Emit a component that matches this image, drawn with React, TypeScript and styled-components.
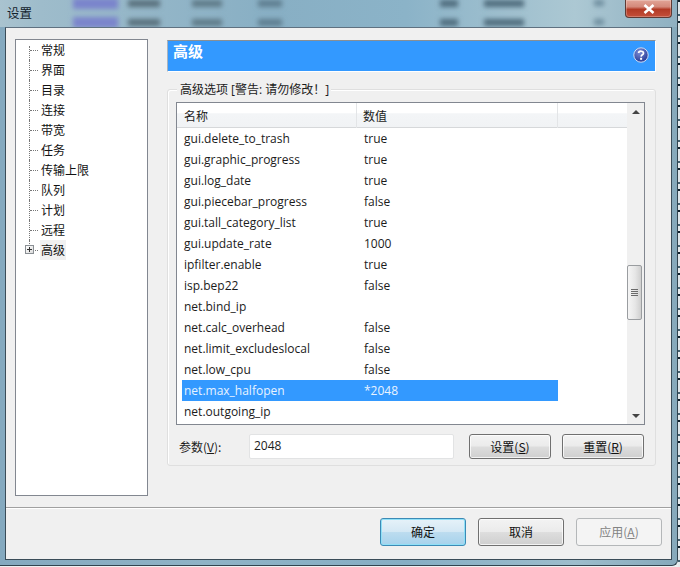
import React from "react";
import styled, { createGlobalStyle } from "styled-components";

const Global = createGlobalStyle`
  html, body { margin: 0; padding: 0; background: #eef1f2; }
  * { box-sizing: border-box; }
`;

const Page = styled.div`
  width: 680px;
  height: 567px;
  overflow: hidden;
  background:
    repeating-linear-gradient(180deg, #10202c 0 2px, #dfe6ea 2px 14px, #44606f 14px 16px, #e8ecee 16px 21px) right top / 2px 100% no-repeat,
    #eef1f2;
  font-family: "Open Sans", "Noto Sans CJK SC", sans-serif;
  font-size: 12px;
  color: #1b1b1b;
`;

const Win = styled.div`
  position: relative;
  width: 678px;
  height: 566px;
  display: flex;
  flex-direction: column;
  border-right: 1px solid #31444f;
  border-bottom: 1px solid #31444f;
  border-bottom-right-radius: 6px;
  background: linear-gradient(90deg, #84a9bf 0%, #8fb3c6 30%, #86aec4 60%, #9dbdcc 85%, #86a9bb 100%);
`;

const TitleBar = styled.div`
  position: relative;
  height: 27px;
  flex: none;
  overflow: hidden;
  background: linear-gradient(90deg, #a9c3cf 0, #9ebccb 6%, #88afc4 40%, #8bb3c8 60%, #acc8d3 85%, #8fb0c1 100%);
`;

const Smudges = styled.svg`
  position: absolute;
  inset: 0;
`;

const Title = styled.span`
  position: absolute;
  left: 7px;
  top: 4px;
  font: 12px/18px "Noto Sans CJK SC", sans-serif;
  font-size: 12.5px;
  color: #12222c;
`;

const CloseBtn = styled.div`
  position: absolute;
  left: 625px;
  top: 0;
  width: 47px;
  height: 18px;
  display: flex;
  align-items: center;
  justify-content: center;
  border: 1px solid #5e3a34;
  border-top: none;
  border-radius: 0 0 4px 4px;
  background: linear-gradient(180deg, #e2a597 0%, #d4897a 40%, #b23a25 55%, #c4503a 100%);
  box-shadow: inset 0 0 0 1px rgba(255, 255, 255, 0.25);
`;

const Client = styled.div`
  flex: 1;
  margin: 0 5px 5px 5px;
  display: flex;
  flex-direction: column;
  border: 1px solid #3a4c58;
  border-top-color: #5f7180;
  background: #f0f0f0;
`;

const Body = styled.div`
  height: 479px;
  flex: none;
  display: flex;
  gap: 19px;
  padding: 11px 0 0 9px;
`;

const Tree = styled.ul`
  list-style: none;
  margin: 0;
  padding: 0;
  width: 133px;
  height: 457px;
  background: #fff;
  border: 1px solid #828790;
`;

const TreeItem = styled.li<{ $first?: boolean; $last?: boolean }>`
  position: relative;
  height: 20px;
  padding-left: 24px;
  display: flex;
  align-items: center;
  &::before {
    content: "";
    position: absolute;
    left: 13px;
    top: ${(p) => (p.$first ? "6px" : "0")};
    height: ${(p) => (p.$first ? "14px" : p.$last ? "10px" : "20px")};
    border-left: 1px dotted #777;
  }
  &::after {
    content: "";
    position: absolute;
    left: 14px;
    top: 10px;
    width: 8px;
    border-top: 1px dotted #777;
  }
`;

const TreeLabel = styled.span<{ $selected?: boolean }>`
  font: 12px/20px "Noto Sans CJK SC", sans-serif;
  padding: 0 1px;
  background: ${(p) => (p.$selected ? "#f0f0f0" : "transparent")};
  color: #111;
`;

const PlusBox = styled.span`
  position: absolute;
  z-index: 1;
  left: 9px;
  top: 5px;
  width: 9px;
  height: 9px;
  border: 1px solid #8a8f94;
  background:
    linear-gradient(#333, #333) center / 5px 1px no-repeat,
    linear-gradient(#333, #333) center / 1px 5px no-repeat,
    linear-gradient(135deg, #fff, #dcdcdc);
`;

const Panel = styled.div`
  width: 489px;
  display: flex;
  flex-direction: column;
`;

const Banner = styled.div`
  margin-top: 1px;
  height: 32px;
  flex: none;
  display: flex;
  justify-content: space-between;
  padding: 0 6px 0 5px;
  background: #3399ff;
  border-top: 1px solid #8a8f94;
  border-left: 1px solid #aab4be;
  border-bottom: 1px solid #fff;
  border-right: 1px solid #fff;
`;

const BannerTitle = styled.span`
  font: bold 15px/20px "Noto Sans CJK SC", sans-serif;
  color: #fff;
`;

const HelpIcon = styled.svg`
  margin-top: 6px;
`;

const Group = styled.div`
  position: relative;
  margin-top: 17px;
  height: 377px;
  padding: 12px 10px 0 8px;
  border: 1px solid #dfdfdf;
  border-radius: 3px;
  box-shadow: inset 1px 1px 0 #fff;
`;

const Legend = styled.span`
  position: absolute;
  left: 9px;
  top: -8px;
  padding: 0 2px 0 3px;
  background: #f0f0f0;
  font: 12px/16px "Open Sans", "Noto Sans CJK SC", sans-serif;
  white-space: pre;
`;

const ListBox = styled.div`
  height: 323px;
  display: flex;
  background: #fff;
  border: 1px solid #828790;
`;

const Table = styled.div`
  flex: 1;
  min-width: 0;
  overflow: hidden;
`;

const HeadRow = styled.div`
  display: grid;
  grid-template-columns: 180px 201px 1fr;
  height: 25px;
  border-bottom: 1px solid #d6d8da;
  background: linear-gradient(180deg, #ffffff 0%, #ffffff 40%, #f3f5f7 45%, #f1f3f5 100%);
`;

const HeadCell = styled.div<{ $pad: number }>`
  padding-left: ${(p) => p.$pad}px;
  border-right: 1px solid #e3e5e7;
  font: 12px/25px "Noto Sans CJK SC", sans-serif;
`;

const Row = styled.div<{ $selected?: boolean }>`
  display: grid;
  grid-template-columns: 175px 201px;
  height: 21px;
  margin-left: 5px;
  width: 376px;
  line-height: 21px;
  font-size: 12px;
  background: ${(p) => (p.$selected ? "#3399ff" : "transparent")};
  color: ${(p) => (p.$selected ? "#e8f3ff" : "#1b1b1b")};
`;

const Cell = styled.div<{ $pad: number }>`
  padding-left: ${(p) => p.$pad}px;
  white-space: nowrap;
`;

const ScrollBar = styled.div`
  width: 17px;
  flex: none;
  display: flex;
  flex-direction: column;
  background: #f0f0f0;
`;

const ArrowBtn = styled.div`
  height: 17px;
  flex: none;
  display: flex;
  align-items: center;
  justify-content: center;
`;

const Arrow = styled.span<{ $down?: boolean }>`
  width: 0;
  height: 0;
  border-left: 4px solid transparent;
  border-right: 4px solid transparent;
  ${(p) => (p.$down ? "border-top: 4px solid #444;" : "border-bottom: 4px solid #444;")}
`;

const Track = styled.div`
  flex: 1;
`;

const Thumb = styled.div`
  margin-top: 145px;
  width: 15px;
  height: 55px;
  display: flex;
  flex-direction: column;
  align-items: center;
  justify-content: center;
  gap: 1px;
  border: 1px solid #9a9da0;
  border-radius: 2px;
  background: linear-gradient(90deg, #f5f5f5 0%, #e6e6e6 55%, #cfcfcf 100%);
`;

const Grip = styled.span`
  width: 7px;
  height: 1px;
  background: #6a6a6a;
`;

const ParamRow = styled.div`
  margin-top: 9px;
  display: flex;
  align-items: flex-start;
  padding-left: 3px;
`;

const ParamLabel = styled.label`
  width: 70px;
  flex: none;
  font: 12px/25px "Noto Sans CJK SC", sans-serif;
`;

const Input = styled.div`
  width: 205px;
  height: 25px;
  flex: none;
  margin-right: 15px;
  padding-left: 4px;
  background: #fff;
  border: 1px solid #e2e3e4;
  border-radius: 2px;
  line-height: 22px;
  font-size: 12px;
`;

const Btn = styled.div<{ $w: number; $h: number; $kind?: "primary" | "disabled" }>`
  width: ${(p) => p.$w}px;
  height: ${(p) => p.$h}px;
  flex: none;
  display: flex;
  align-items: center;
  justify-content: center;
  font: 12px/1 "Noto Sans CJK SC", sans-serif;
  border-radius: 3px;
  border: 1px solid
    ${(p) => (p.$kind === "primary" ? "#3c8ab5" : p.$kind === "disabled" ? "#b4b7b9" : "#707070")};
  color: ${(p) => (p.$kind === "disabled" ? "#838383" : "#111")};
  background: ${(p) =>
    p.$kind === "primary"
      ? "linear-gradient(180deg, #e6f2f9 0%, #d4e8f4 48%, #bcdcef 52%, #a6d2ec 100%)"
      : p.$kind === "disabled"
      ? "#f4f4f4"
      : "linear-gradient(180deg, #f3f3f3 0%, #ebebeb 48%, #dddddd 52%, #cfcfcf 100%)"};
  box-shadow: ${(p) =>
    p.$kind === "primary"
      ? "inset 0 0 0 1px #8fe0f7"
      : p.$kind === "disabled"
      ? "none"
      : "inset 0 0 0 1px rgba(255,255,255,.75)"};
`;

const SmallGap = styled.span`
  width: 11px;
  flex: none;
`;

const Footer = styled.div`
  flex: 1;
  display: flex;
  justify-content: flex-end;
  gap: 12px;
  padding: 10px 9px 0 0;
  border-top: 1px solid #a0a0a0;
  box-shadow: inset 0 1px 0 #fff;
`;

const rows: [string, string][] = [
  ["gui.delete_to_trash", "true"],
  ["gui.graphic_progress", "true"],
  ["gui.log_date", "true"],
  ["gui.piecebar_progress", "false"],
  ["gui.tall_category_list", "true"],
  ["gui.update_rate", "1000"],
  ["ipfilter.enable", "true"],
  ["isp.bep22", "false"],
  ["net.bind_ip", ""],
  ["net.calc_overhead", "false"],
  ["net.limit_excludeslocal", "false"],
  ["net.low_cpu", "false"],
  ["net.max_halfopen", "*2048"],
  ["net.outgoing_ip", ""],
];

const tree = ["常规", "界面", "目录", "连接", "带宽", "任务", "传输上限", "队列", "计划", "远程"];

export default function App() {
  return (
    <Page>
      <Global />
      <Win>
        <TitleBar>
          <Smudges width="678" height="27" aria-hidden="true">
            <defs>
              <filter id="b" x="-30%" y="-100%" width="160%" height="300%">
                <feGaussianBlur stdDeviation="2.6" />
              </filter>
            </defs>
            <g filter="url(#b)">
              {[0, 19].map((y) => (
                <g key={y}>
                  <rect x="73" y={y - 2} width="45" height="11" fill="#7a84cc" />
                  <rect x="128" y={y} width="32" height="7" fill="#586f7b" />
                  <rect x="192" y={y} width="30" height="7" fill="#5f7a88" />
                  <rect x="258" y={y} width="24" height="7" fill="#5f7e90" />
                  <rect x="440" y={y} width="18" height="7" fill="#4f6c7d" />
                  <rect x="484" y={y} width="40" height="7" fill="#4f6c7d" />
                  <rect x="594" y={y} width="10" height="6" fill="#6d8c9d" />
                </g>
              ))}
            </g>
          </Smudges>
          <Title>设置</Title>
          <CloseBtn>
            <svg width="12" height="10" viewBox="0 0 12 10">
              <path d="M1.5 1 L10.5 9 M10.5 1 L1.5 9" stroke="#fff" strokeWidth="2.6" />
            </svg>
          </CloseBtn>
        </TitleBar>
        <Client>
          <Body>
            <Tree>
              {tree.map((t, i) => (
                <TreeItem key={t} $first={i === 0}>
                  <TreeLabel>{t}</TreeLabel>
                </TreeItem>
              ))}
              <TreeItem $last>
                <PlusBox />
                <TreeLabel $selected>高级</TreeLabel>
              </TreeItem>
            </Tree>
            <Panel>
              <Banner>
                <BannerTitle>高级</BannerTitle>
                <HelpIcon width="16" height="16" viewBox="0 0 16 16">
                  <defs>
                    <radialGradient id="h" cx="0.4" cy="0.3" r="0.8">
                      <stop offset="0" stopColor="#7f8fd8" />
                      <stop offset="1" stopColor="#1c2f8c" />
                    </radialGradient>
                  </defs>
                  <circle cx="8" cy="8" r="7.2" fill="url(#h)" stroke="#dfe6f5" strokeWidth="0.9" />
                  <path d="M5.6 6 C5.8 3.6 10.6 3.6 10.5 6.2 C10.4 7.8 8.2 7.8 8.1 9.6" fill="none" stroke="#fff" strokeWidth="1.7" />
                  <rect x="7.1" y="10.8" width="2" height="2" fill="#fff" />
                </HelpIcon>
              </Banner>
              <Group>
                <Legend>高级选项 [警告: 请勿修改！]</Legend>
                <ListBox>
                  <Table>
                    <HeadRow>
                      <HeadCell $pad={7}>名称</HeadCell>
                      <HeadCell $pad={6}>数值</HeadCell>
                    </HeadRow>
                    {rows.map(([k, v]) => (
                      <Row key={k} $selected={k === "net.max_halfopen"}>
                        <Cell $pad={2}>{k}</Cell>
                        <Cell $pad={7}>{v}</Cell>
                      </Row>
                    ))}
                  </Table>
                  <ScrollBar>
                    <ArrowBtn>
                      <Arrow />
                    </ArrowBtn>
                    <Track>
                      <Thumb>
                        <Grip />
                        <Grip />
                        <Grip />
                        <Grip />
                      </Thumb>
                    </Track>
                    <ArrowBtn>
                      <Arrow $down />
                    </ArrowBtn>
                  </ScrollBar>
                </ListBox>
                <ParamRow>
                  <ParamLabel>
                    参数(<u>V</u>):
                  </ParamLabel>
                  <Input>2048</Input>
                  <Btn $w={82} $h={25}>
                    设置(<u>S</u>)
                  </Btn>
                  <SmallGap />
                  <Btn $w={82} $h={25}>
                    重置(<u>R</u>)
                  </Btn>
                </ParamRow>
              </Group>
            </Panel>
          </Body>
          <Footer>
            <Btn $w={86} $h={28} $kind="primary">
              确定
            </Btn>
            <Btn $w={86} $h={28}>
              取消
            </Btn>
            <Btn $w={86} $h={28} $kind="disabled">
              应用(<u>A</u>)
            </Btn>
          </Footer>
        </Client>
      </Win>
    </Page>
  );
}
